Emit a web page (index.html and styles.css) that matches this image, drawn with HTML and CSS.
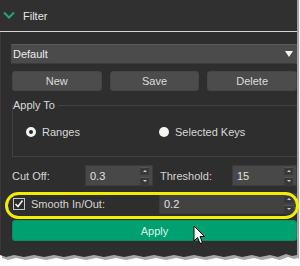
FILE: index.html
```html
<!DOCTYPE html>
<html>
<head>
<title>Filter</title>
<link rel="stylesheet" href="styles.css">
</head>
<body>

<div class="panel">
    <div class="header">
        <svg class="chevron" width="12" height="8" viewBox="0 0 12 8">
            <path d="M1 1.5 L6 6.5 L11 1.5" fill="none" stroke="#1fa67a" stroke-width="2"/>
        </svg>
        <span>Filter</span>
    </div>

    <div class="content">
        <!-- Preset selection -->
        <div class="dropdown">
            <span>Default</span>
            <span class="caret"></span>
        </div>

        <div class="btn-row">
            <button class="btn">New</button>
            <button class="btn">Save</button>
            <button class="btn">Delete</button>
        </div>

        <fieldset class="group">
            <legend>Apply To</legend>
            <div class="radio-row">
                <label class="radio first"><span class="dot checked"></span>Ranges</label>
                <label class="radio"><span class="dot"></span>Selected Keys</label>
            </div>
        </fieldset>

        <div class="field-row">
            <span class="lbl cut">Cut Off:</span>
            <div class="spin cut-spin"><span>0.3</span><span class="arrows"><i class="up"></i><i class="down"></i></span></div>
            <span class="lbl thr">Threshold:</span>
            <div class="spin"><span>15</span><span class="arrows"><i class="up"></i><i class="down"></i></span></div>
        </div>

        <div class="field-row smooth">
            <span class="check">
                <svg width="10" height="10" viewBox="0 0 10 10"><path d="M1.5 5 L4 7.5 L8.5 1.5" fill="none" stroke="#f0f0f0" stroke-width="1.6"/></svg>
            </span>
            <span class="lbl smooth-lbl">Smooth In/Out:</span>
            <div class="spin dark"><span>0.2</span><span class="arrows"><i class="up"></i><i class="down"></i></span></div>
        </div>

        <button class="apply">Apply</button>
    </div>

    <!-- annotation ring -->
    <div class="ring"></div>

    <svg class="cursor" width="14" height="20" viewBox="0 0 14 20">
        <path d="M1 1 L1 16 L4.5 12.5 L7 18.5 L9.5 17.5 L7 11.5 L11.5 11.5 Z" fill="#fff" stroke="#000" stroke-width="1"/>
    </svg>
</div>

<svg class="tear" width="300" height="14" viewBox="0 0 300 14">
    <polygon points="2,0 299,0 299,8 294,9 288,7 280,10 272,8 262,10 254,8 244,10 236,8 226,10 216,8 206,10 196,8 186,10 176,8 166,10 156,8 146,10 136,8 126,10 116,8 106,10 96,8 86,10 76,8 66,10 56,8 46,10 36,8 26,10 16,8 8,10 2,8" fill="#a8a8a8"/>
    <polygon points="0,0 297,0 297,5 292,6 286,4 278,7 270,5 260,7 252,5 242,7 234,5 224,7 214,5 204,7 194,5 184,7 174,5 164,7 154,5 144,7 134,5 124,7 114,5 104,7 94,5 84,7 74,5 64,7 54,5 44,7 34,5 24,7 14,5 6,7 0,5" fill="#2e2e2e"/>
</svg>

</body>
</html>
```

FILE: styles.css
```css
body {
    margin: 0;
    background: #fff;
    font-family: "Liberation Sans", Arial, sans-serif;
    font-size: 11px;
    color: #d8d8d8;
}

.panel {
    position: relative;
    width: 297px;
    height: 250px;
    background: #2e2e2e;
    border-right: 2px solid #a6a6a6;
    border-left: 1px solid #3a3a3a;
    box-sizing: border-box;
    width: 299px;
}

.header {
    height: 31px;
    display: flex;
    align-items: center;
    background: #303030;
    border-bottom: 1px solid #d6d6d6;
    margin-left: -1px;
    color: #e6e6e6;
}

.chevron {
    margin-left: 3px;
    margin-right: 8px;
    margin-top: -2px;
}

.content {
    padding: 12px 0 0 10px;
}

.dropdown {
    height: 20px;
    box-sizing: border-box;
    display: flex;
    align-items: center;
    justify-content: space-between;
    padding: 0 4px 0 2px;
    background: #4b4b4b;
    border-top: 1px solid #5a5a5a;
    border-bottom: 1px solid #3c3c3c;
    color: #ececec;
}

.caret {
    width: 0;
    height: 0;
    border-left: 4px solid transparent;
    border-right: 4px solid transparent;
    border-top: 6px solid #f4f4f4;
}

.btn-row {
    display: grid;
    grid-template-columns: 1fr 1fr 1fr;
    gap: 8px;
    margin: 7px 0 0 1px;
}

.btn {
    height: 20px;
    border: 1px solid #464646;
    border-radius: 3px;
    background: #4c4c4c;
    color: #dcdcdc;
    font-family: inherit;
    font-size: 11px;
    padding: 0;
}

.group {
    margin: 8px 0 0 1px;
    padding: 13px 0 17px 0;
    border: 1px solid #424242;
    border-right: none;
}

.group legend {
    padding: 0 3px 0 0;
    line-height: 13px;
    color: #dadada;
}

.radio-row {
    display: flex;
    height: 14px;
    align-items: center;
}

.radio {
    display: flex;
    align-items: center;
    gap: 6px;
}

.radio.first {
    width: 133px;
    margin-left: 13px;
}

.dot {
    width: 10px;
    height: 10px;
    border-radius: 50%;
    background: #f4f4f4;
    box-sizing: border-box;
}

.dot.checked {
    border: 3px solid #f4f4f4;
    background: #262626;
}

.field-row {
    display: flex;
    align-items: center;
    margin: 8px 0 0 1px;
    height: 21px;
}

.lbl {
    color: #d4d4d4;
}

.lbl.cut {
    width: 73px;
}

.lbl.thr {
    width: 72px;
    margin-left: 7px;
}

.cut-spin {
    width: 68px;
    flex: none !important;
}

.spin {
    flex: 1;
    height: 21px;
    box-sizing: border-box;
    display: flex;
    align-items: center;
    justify-content: space-between;
    padding: 0 3px 0 4px;
    background: #484848;
    border: 1px solid #3b3b3b;
    color: #e2e2e2;
}

.spin.dark {
    background: #424242;
}

.arrows {
    display: flex;
    flex-direction: column;
    gap: 2px;
}

.arrows i {
    width: 9px;
    height: 7px;
    background: #393939;
    border-top: 1px solid #555;
    display: flex;
    align-items: center;
    justify-content: center;
}

.arrows i::after {
    content: "";
    border-left: 2px solid transparent;
    border-right: 2px solid transparent;
}

.arrows .up::after {
    border-bottom: 2px solid #cfcfcf;
}

.arrows .down::after {
    border-top: 2px solid #cfcfcf;
}

.smooth {
    margin-top: 7px;
}

.check {
    width: 12px;
    height: 12px;
    box-sizing: border-box;
    border: 1px solid #c8c8c8;
    background: #2a2a2a;
    margin-left: 1px;
    display: flex;
    align-items: center;
    justify-content: center;
}

.smooth-lbl {
    width: 128px;
    margin-left: 6px;
}

.apply {
    display: block;
    width: 100%;
    width: calc(100% - 1px);
    margin: 6px 0 0 1px;
    height: 21px;
    border: 1px solid #0c8c63;
    border-radius: 3px;
    background: #00a071;
    color: #dff2ea;
    font-family: inherit;
    font-size: 11px;
}

.ring {
    position: absolute;
    left: 4px;
    top: 192px;
    width: 294px;
    height: 27px;
    box-sizing: border-box;
    border: 3px solid #f2ee00;
    border-radius: 14px;
}

.cursor {
    position: absolute;
    left: 192px;
    top: 225px;
}

.tear {
    display: block;
}
```
